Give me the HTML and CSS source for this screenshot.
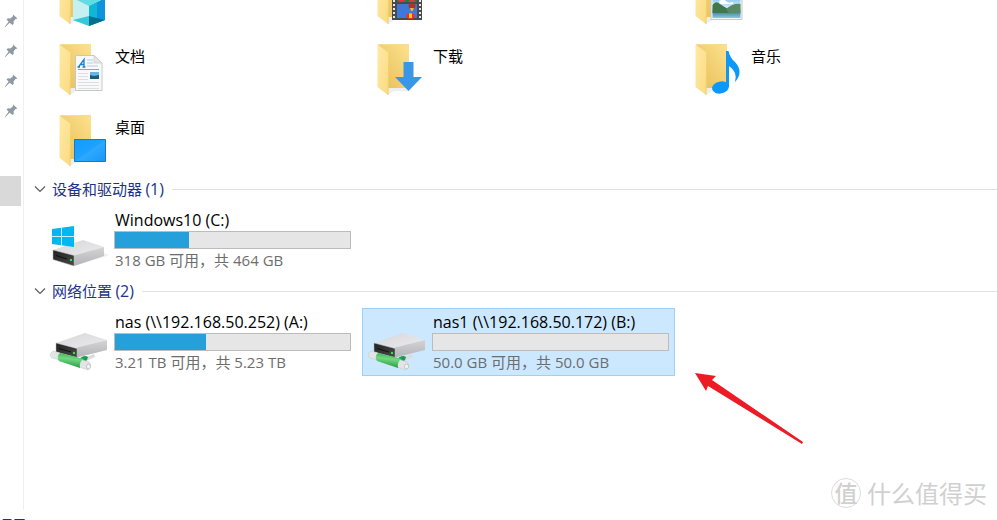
FILE: index.html
```html
<!DOCTYPE html>
<html lang="zh-CN">
<head>
    <meta charset="UTF-8">
    <meta name="viewport" content="width=device-width, initial-scale=1.0">
    <title>此电脑</title>
    <link rel="stylesheet" href="styles.css">
</head>
<body>
    <!-- shared icon parts -->
    <svg class="defs" width="0" height="0" aria-hidden="true">
        <defs>
            <linearGradient id="folder-back" x1="0" y1="1" x2="1" y2="0">
                <stop offset="0" stop-color="#e6bd58"/>
                <stop offset="1" stop-color="#fde28d"/>
            </linearGradient>
            <linearGradient id="folder-front" x1="0" y1="0" x2="1" y2="1">
                <stop offset="0" stop-color="#ffe9a6"/>
                <stop offset="1" stop-color="#fbdb80"/>
            </linearGradient>
            <linearGradient id="drive-top" x1="0" y1="0" x2="1" y2="1">
                <stop offset="0" stop-color="#d6d6d9"/>
                <stop offset="1" stop-color="#ececef"/>
            </linearGradient>
            <linearGradient id="drive-side" x1="0" y1="0" x2="0" y2="1">
                <stop offset="0" stop-color="#d4d4d7"/>
                <stop offset="1" stop-color="#b4b4b8"/>
            </linearGradient>
            <linearGradient id="drive-front" x1="0" y1="0" x2="1" y2="1">
                <stop offset="0" stop-color="#222"/>
                <stop offset="1" stop-color="#484848"/>
            </linearGradient>
            <linearGradient id="pipe" x1="0.6" y1="0" x2="0.4" y2="1">
                <stop offset="0" stop-color="#35a955"/>
                <stop offset="0.4" stop-color="#6fd97f"/>
                <stop offset="1" stop-color="#23923f"/>
            </linearGradient>
            <linearGradient id="screen" x1="0" y1="0" x2="1" y2="1">
                <stop offset="0" stop-color="#0d9cff"/>
                <stop offset="0.5" stop-color="#1ea2ff"/>
                <stop offset="0.51" stop-color="#2ea9ff"/>
                <stop offset="1" stop-color="#1797f5"/>
            </linearGradient>
            <linearGradient id="sky" x1="0" y1="0" x2="0" y2="1">
                <stop offset="0" stop-color="#5db4ea"/>
                <stop offset="0.55" stop-color="#d7eef8"/>
                <stop offset="0.75" stop-color="#3f82a8"/>
                <stop offset="1" stop-color="#8cc8e2"/>
            </linearGradient>
            <symbol id="folder" viewBox="45 34 69 66">
                <path d="M70 95 76 91H91V87H70Z" fill="#eee"/>
                <path d="M60 44H91V88H70Z" fill="url(#folder-back)"/>
                <path d="M60 44.5H90.500" fill="none" stroke="#f5dc94"/>
                <path d="M59.500 44.500 71 53 70 95 59.500 87Z" fill="url(#folder-front)"/>
                <path d="M71 53 70 95" stroke="#f2cf6c" fill="none"/>
            </symbol>
            <symbol id="net-drive" viewBox="45 309 69 66">
                <path d="M84 358 94 354 95 357 86 361Z" fill="#d9dcdc"/>
                <path d="M78 360Q84 354 88 357L87 360 80 366Z" fill="#1e9a50"/>
                <path d="M56 343 85 333 107 340 77 348Z" fill="url(#drive-top)"/>
                <path d="M77 347.500 107 340V350L77 357.500Z" fill="url(#drive-side)"/>
                <path d="M56 343 77 348.500V357.500L56 352Z" fill="url(#drive-front)" stroke="#bbb" stroke-width="0.500"/>
                <path d="M59 348.500 71 352" stroke="#111"/>
                <circle cx="74" cy="353" r="1.200" fill="#2eea4c"/>
                <path d="M53 351 60 353V360L52 358Q48 355 53 351Z" fill="#e2e5e5" stroke="#bfc6c6" stroke-width="0.500"/>
                <path d="M80 359 89 362Q93 366 88 370L79 367Z" fill="#e2e5e5" stroke="#bfc6c6" stroke-width="0.500"/>
                <path d="M60 353 84 359Q79 361 80 368L59 361Q56 356 60 353Z" fill="url(#pipe)"/>
                <ellipse cx="88.500" cy="366.500" rx="2" ry="2.500" fill="#f5f5f5" stroke="#b4b4b4" stroke-width="0.700"/>
            </symbol>
            <symbol id="pin" viewBox="0 0 14 14">
                <path d="M9 0.500 13.500 4.500 11.500 5 9.500 7.500 9.800 9.500 8.500 11 5.700 8.800 1 13.200 0.800 12.800 4.600 7.700 2.500 5.200 4 4.200 6.300 4.500 8.800 2.500Z" fill="#8e99a3"/>
            </symbol>
        </defs>
    </svg>

    <div class="window">
        <div class="panes">
            <nav class="sidebar" aria-label="快速访问">
                <ul>
                    <li><svg class="pin"><use href="#pin"/></svg></li>
                    <li><svg class="pin"><use href="#pin"/></svg></li>
                    <li><svg class="pin"><use href="#pin"/></svg></li>
                    <li><svg class="pin"><use href="#pin"/></svg></li>
                    <li class="blank"></li>
                    <li class="current"></li>
                </ul>
            </nav>

            <main class="content">
                <ul class="tiles folders">
                    <li class="tile">
                        <svg class="icon" viewBox="45 -37 69 66">
                            <use href="#folder" x="45" y="-37" width="69" height="66"/>
                            <path d="M73 -2 89 6V26L73 20Z" fill="#c4f0f1"/>
                            <path d="M89 6 105 -2V20L89 26Z" fill="#0d94da"/>
                            <path d="M73 20 89 16V26Z" fill="#35c8d8"/>
                            <path d="M89 16 105 20 89 26Z" fill="#03708e"/>
                            <path d="M89 6 97 2V18L89 16Z" fill="#10b6d6"/>
                            <path d="M73 -2 89 -8 105 -2 89 6Z" fill="#5fdce6"/>
                        </svg>
                    </li>
                    <li class="tile">
                        <svg class="icon" viewBox="45 -37 69 66">
                            <use href="#folder" x="45" y="-37" width="69" height="66"/>
                            <path d="M74 -10H104V20H74Z" fill="#4a4a4a"/>
                            <path d="M79 -8H99V2H79Z" fill="#128048"/>
                            <path d="M79 4H99V18H79Z" fill="#3f78dc"/>
                            <path d="M76 -8V20M102 -8V20" stroke="#e8e8e8" stroke-width="2" stroke-dasharray="2 2"/>
                            <path d="M80 0Q84 -3 88 2H81Z" fill="#e8313a"/>
                            <path d="M93 -2Q97 0 98 2H90Z" fill="#d8402c"/>
                            <ellipse cx="94" cy="6" rx="3.500" ry="3" fill="#b93025"/>
                            <path d="M92 8H96L94.500 11H93Z" fill="#f0b92e"/>
                            <ellipse cx="92.500" cy="16" rx="4.500" ry="3" fill="#e8352b"/>
                            <path d="M91 13.300H94V18H91Z" fill="#f6cc2e"/>
                        </svg>
                    </li>
                    <li class="tile">
                        <svg class="icon" viewBox="45 -37 69 66">
                            <use href="#folder" x="45" y="-37" width="69" height="66"/>
                            <path d="M75 -8H106V19.500H75Z" fill="#f5f5f5" stroke="#c3cbd0"/>
                            <path d="M76.500 -6H104.500V18H76.500Z" fill="url(#sky)"/>
                            <path d="M76.500 5Q80 0 84 4L95 11 104.500 13H76.500Z" fill="#41774d"/>
                            <path d="M90 9Q97 3 104.500 4V13H93Z" fill="#598a65"/>
                            <path d="M83 1Q88 -2 90 1T97 2V4H84Z" fill="#fff"/>
                        </svg>
                    </li>
                    <li class="tile">
                        <svg class="icon" viewBox="45 34 69 66">
                            <use href="#folder" x="45" y="34" width="69" height="66"/>
                            <path d="M75.500 55.500H94L102 63V90.500H75.500Z" fill="#f9f9fa" stroke="#c5c8cb"/>
                            <path d="M94 55.500V63H102Z" fill="#e4e6e8" stroke="#c5c8cb" stroke-width="0.700"/>
                            <path d="M78.500 67 84 59.500V67M80.500 64.500H84M77.500 67H80M82.500 67H85.500" fill="none" stroke="#1c82c8" stroke-width="1.300"/>
                            <path d="M87 60H93M87 63H93M87 66H98" stroke="#a8d0e8"/>
                            <path d="M78 69.500H99" stroke="#6bb0de"/>
                            <path d="M78 73.500H88M78 76.500H88M78 79.500H88M78 82.500H99M78 85.500H99M78 88.500H99" stroke="#dcdfe2"/>
                            <path d="M90 72H99V79H90Z" fill="#65b7e8"/>
                            <path d="M90 75 94 76 99 75V79H90Z" fill="#1d5d78"/>
                        </svg>
                        <div class="info"><span class="name">文档</span></div>
                    </li>
                    <li class="tile">
                        <svg class="icon" viewBox="45 34 69 66">
                            <use href="#folder" x="45" y="34" width="69" height="66"/>
                            <path d="M85.500 62H95.500V77H104L90.500 91 77 77H85.500Z" fill="#3a97e8"/>
                        </svg>
                        <div class="info"><span class="name">下载</span></div>
                    </li>
                    <li class="tile">
                        <svg class="icon" viewBox="45 34 69 66">
                            <use href="#folder" x="45" y="34" width="69" height="66"/>
                            <ellipse cx="84.500" cy="87.500" rx="8.500" ry="6" transform="rotate(-12 84.500 87.500)" fill="#0a99fb"/>
                            <path d="M90 51H92.500Q94 58 99 62 108 72 99 82 102 72 93 66V87H90Z" fill="#0a99fb"/>
                        </svg>
                        <div class="info"><span class="name">音乐</span></div>
                    </li>
                    <li class="tile">
                        <svg class="icon" viewBox="45 34 69 66">
                            <use href="#folder" x="45" y="34" width="69" height="66"/>
                            <path d="M74.500 68.500H105.500V90.500H74.500Z" fill="url(#screen)" stroke="#1679c4"/>
                        </svg>
                        <div class="info"><span class="name">桌面</span></div>
                    </li>
                </ul>

                <section>
                    <h2 class="group">
                        <svg class="chevron" viewBox="0 0 12 8"><path d="M1 1.500 6 6.500 11 1.500"/></svg>
                        <span>设备和驱动器 <span class="latin">(1)</span></span>
                    </h2>
                    <ul class="tiles">
                        <li class="tile">
                            <svg class="icon" viewBox="45 207 69 66">
                                <path d="M74 266 104 257 109 255 104 253 74 262Z" fill="#f0f0f0"/>
                                <path d="M53 250 83 240 104 247 74 256Z" fill="url(#drive-top)"/>
                                <path d="M74 255.500 104 247V256L74 266Z" fill="url(#drive-side)"/>
                                <path d="M53 250 74 255.500V266L53 259.500Z" fill="url(#drive-front)" stroke="#bbb" stroke-width="0.500"/>
                                <path d="M56 255.500 67 259" stroke="#111"/>
                                <circle cx="71" cy="260" r="1.200" fill="#2eea4c"/>
                                <path d="M52 229 74 226V247L52 244Z" fill="#00b7f1"/>
                                <path d="M61.500 227V246M52 236.500H74" stroke="#c9f1fd"/>
                            </svg>
                            <div class="info">
                                <span class="name latin">Windows10 (C:)</span>
                                <progress value="146" max="464" aria-label="Windows10 (C:)"></progress>
                                <span class="space">318 GB 可用，共 464 GB</span>
                            </div>
                        </li>
                    </ul>
                </section>

                <section>
                    <h2 class="group">
                        <svg class="chevron" viewBox="0 0 12 8"><path d="M1 1.500 6 6.500 11 1.500"/></svg>
                        <span>网络位置 <span class="latin">(2)</span></span>
                    </h2>
                    <ul class="tiles">
                        <li class="tile">
                            <svg class="icon"><use href="#net-drive"/></svg>
                            <div class="info">
                                <span class="name latin">nas (\\192.168.50.252) (A:)</span>
                                <progress value="202" max="523" aria-label="nas (A:)"></progress>
                                <span class="space">3.21 TB 可用，共 5.23 TB</span>
                            </div>
                        </li>
                        <li class="tile selected">
                            <svg class="icon"><use href="#net-drive"/></svg>
                            <div class="info">
                                <span class="name latin">nas1 (\\192.168.50.172) (B:)</span>
                                <progress value="0" max="50" aria-label="nas1 (B:)"></progress>
                                <span class="space">50.0 GB 可用，共 50.0 GB</span>
                            </div>
                        </li>
                    </ul>
                </section>
            </main>
        </div>

        <footer class="status">
            <span>项目</span>
        </footer>

        <svg class="arrow" viewBox="0 0 110 72" aria-hidden="true">
            <path d="M0 0 21 3 17 7 108 69 107 71 13 13 11 18Z" fill="#ed1c24"/>
        </svg>

        <div class="watermark">
            <span class="badge">值</span>
            <span>什么值得买</span>
        </div>
    </div>
</body>
</html>
```
FILE: styles.css
```css
* {
    box-sizing: border-box;
}
body {
    margin: 0;
    background-color: #fff;
    color: #000;
    font-family: "Noto Sans CJK SC", sans-serif;
    font-size: 15px;
    line-height: 20px;
}
ul {
    list-style: none;
    margin: 0;
    padding: 0;
}
.defs {
    position: absolute;
}
.latin, .space {
    font-family: "Open Sans", "Noto Sans CJK SC", sans-serif;
}
.latin {
    font-size: 16px;
}

/* window frame */
.window {
    position: relative;
    display: flex;
    flex-direction: column;
    height: 100vh;
    overflow: hidden;
}
.panes {
    display: flex;
    flex: 1;
    min-height: 0;
}
.sidebar {
    flex: none;
    width: 24px;
    padding: 6px 2px 0 0;
    border-right: 1px solid #f0f0f0;
}
.sidebar li {
    display: flex;
    align-items: center;
    height: 30px;
    padding-left: 4px;
}
.sidebar .blank {
    height: 50px;
}
.sidebar .current {
    background-color: #d9d9d9;
}
.pin {
    width: 14px;
    height: 14px;
}
.content {
    flex: 1;
    min-width: 0;
    overflow: hidden;
}

/* groups and tiles */
.group {
    display: flex;
    align-items: center;
    height: 34px;
    margin: 0;
    padding-left: 10px;
    color: #1e3287;
    font-size: 15px;
    font-weight: normal;
}
.group::after {
    content: "";
    flex: 1;
    height: 1px;
    margin-left: 8px;
    background-color: #e2e2e2;
}
.chevron {
    width: 12px;
    height: 8px;
    margin-right: 6px;
    fill: none;
    stroke: #5c5c5c;
    stroke-width: 1.2;
}
.tiles {
    display: grid;
    grid-template-columns: repeat(auto-fill, 313px);
    gap: 3px 5px;
    padding-left: 20px;
}
/* the list is scrolled part of the way down */
.folders {
    margin-top: -38px;
}
.tile {
    display: flex;
    height: 68px;
    padding-right: 5px;
    border: 1px solid transparent;
}
.tile.selected {
    background-color: #cce8ff;
    border-color: #99d1ff;
}
.icon {
    flex: none;
    width: 69px;
    height: 66px;
}
.info {
    display: flex;
    flex-direction: column;
    flex: 1;
    gap: 1px;
    padding-top: 3px;
}
.folders .info {
    padding-top: 12px;
}
.name, .space {
    padding-left: 1px;
    white-space: nowrap;
}
.space {
    color: #6d6d6d;
}
progress {
    appearance: none;
    display: block;
    width: 100%;
    height: 18px;
    border: 1px solid #bcbcbc;
    background-color: #e6e6e6;
}
progress::-webkit-progress-bar {
    background-color: #e6e6e6;
}
progress::-webkit-progress-value {
    background-color: #26a0da;
}

/* bottom bar, cut off by the window edge */
.status {
    flex: none;
    height: 10px;
    padding-top: 5px;
    color: #1e3287;
}
.status span {
    display: block;
    margin-left: -3px;
}

.arrow {
    position: absolute;
    left: 695px;
    top: 373px;
    width: 110px;
    height: 72px;
}
.watermark {
    position: absolute;
    right: 10px;
    bottom: 12px;
    display: flex;
    align-items: center;
    gap: 6px;
    color: #d0d0d0;
    font-size: 24px;
    line-height: 30px;
}
.badge {
    width: 30px;
    height: 30px;
    border: 1px solid #dcdcdc;
    border-radius: 50%;
    font-size: 23px;
    font-weight: 500;
    line-height: 27px;
    text-align: center;
}
```
